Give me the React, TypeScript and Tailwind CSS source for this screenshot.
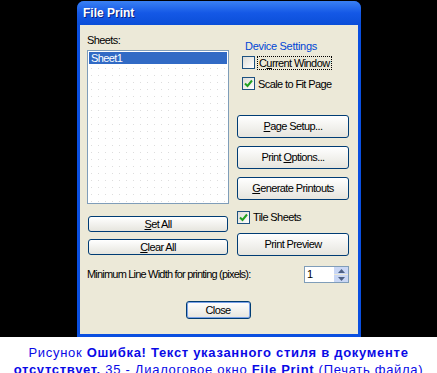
import type { ReactNode } from "react";

function XpButton({ children, className = "" }: { children: ReactNode; className?: string }) {
  return (
    <div
      className={`flex items-center justify-center rounded-[3px] border border-[#003C74] bg-gradient-to-b from-[#FFFFFF] to-[#E6E5DE] text-[11px] tracking-[-0.6px] text-black ${className}`}
    >
      {children}
    </div>
  );
}

function CheckBox({ checked }: { checked?: boolean }) {
  return (
    <span className="flex h-[13px] w-[13px] shrink-0 items-center justify-center border border-[#1C5180] bg-gradient-to-br from-[#DCDCD7] to-[#FFFFFF]">
      {checked && (
        <svg width="9" height="9" viewBox="0 0 9 9">
          <path d="M1 4.5 L3.5 7 L8 1.5" fill="none" stroke="#21A121" strokeWidth="2" />
        </svg>
      )}
    </span>
  );
}

export default function App() {
  return (
    <div className="flex h-[373px] w-[437px] flex-col overflow-hidden bg-black font-['Liberation_Sans',Arial,sans-serif]">
      <div className="h-[337px] shrink-0 pl-[77px] pt-[1px]">
        <div className="flex h-[336px] w-[284px] flex-col rounded-t-[7px] bg-[#0A4FE0]">
          <div className="flex h-[24px] shrink-0 items-center rounded-t-[7px] bg-gradient-to-b from-[#3A80F3] via-[#1458E6] to-[#0A4ED8] pl-[6px]">
            <span className="text-[12px] font-bold text-white [text-shadow:1px_1px_0_#0A1E80]">File Print</span>
          </div>
          <div className="mx-[3px] mb-[3px] flex flex-1 flex-col bg-[#ECE9D8] pl-[7px] pr-[9px] text-[11px] tracking-[-0.6px] text-black">
            <div className="flex gap-[8px]">
              {/* left column */}
              <div className="flex w-[142px] flex-col">
                <div className="mt-[9px] h-[13px] leading-[13px]">Sheets:</div>
                <div className="mt-[3px] h-[154px] border border-[#7F9DB9] bg-white bg-[radial-gradient(#DDDDDD_0.7px,transparent_0.7px)] bg-[length:7px_7px] p-[1px]">
                  <div className="h-[12px] bg-[#316AC5] pl-[2px] leading-[12px] text-white">Sheet1</div>
                </div>
                <XpButton className="ml-[1px] mt-[12px] h-[16px] w-[140px]">
                  <span>
                    <u>S</u>et All
                  </span>
                </XpButton>
                <XpButton className="ml-[1px] mt-[7px] h-[16px] w-[140px]">
                  <span>
                    <u>C</u>lear All
                  </span>
                </XpButton>
              </div>
              {/* right column */}
              <div className="flex w-[112px] flex-col">
                <div className="mt-[15px] h-[13px] pl-[8px] leading-[13px] tracking-[-0.3px] text-[#0046D5]">
                  Device Settings
                </div>
                <div className="mt-[3px] flex h-[13px] items-center gap-[2px] pl-[5px]">
                  <CheckBox />
                  <span className="border border-dotted border-black px-[1px] leading-[12px]">
                    C<u>u</u>rrent Window
                  </span>
                </div>
                <div className="mt-[8px] flex h-[13px] items-center gap-[3px] pl-[5px]">
                  <CheckBox checked />
                  <span className="leading-[12px]">Scale to Fit Page</span>
                </div>
                <XpButton className="mt-[25px] h-[23px]">
                  <span>
                    <u>P</u>age Setup...
                  </span>
                </XpButton>
                <XpButton className="mt-[8px] h-[23px]">
                  <span>
                    Print <u>O</u>ptions...
                  </span>
                </XpButton>
                <XpButton className="mt-[8px] h-[23px]">
                  <span>
                    <u>G</u>enerate Printouts
                  </span>
                </XpButton>
                <div className="mt-[11px] flex h-[12px] items-center gap-[3px]">
                  <CheckBox checked />
                  <span className="leading-[12px]">Tile Sheets</span>
                </div>
                <XpButton className="mt-[10px] h-[23px]">Print Preview</XpButton>
              </div>
            </div>
            <div className="mt-[10px] flex h-[17px] items-center justify-between">
              <span className="tracking-[-0.8px]">Minimum Line Width for printing (pixels):</span>
              <div className="flex h-[17px] w-[45px] border border-[#7F9DB9] bg-white">
                <span className="flex-1 pl-[2px] leading-[15px]">1</span>
                <div className="flex w-[14px] flex-col bg-[#C9D7F5]">
                  <div className="flex flex-1 items-center justify-center border-b border-[#ECE9D8]">
                    <svg width="7" height="4" viewBox="0 0 7 4">
                      <path d="M0 4 L3.5 0 L7 4 Z" fill="#4D6185" />
                    </svg>
                  </div>
                  <div className="flex flex-1 items-center justify-center">
                    <svg width="7" height="4" viewBox="0 0 7 4">
                      <path d="M0 0 L3.5 4 L7 0 Z" fill="#4D6185" />
                    </svg>
                  </div>
                </div>
              </div>
            </div>
            <div className="mt-[18px] flex justify-center">
              <XpButton className="h-[18px] w-[65px] shadow-[inset_0_0_0_1px_#7BA2E7]">Close</XpButton>
            </div>
          </div>
        </div>
      </div>
      <div className="flex-1 bg-white pt-[7px] text-center text-[13px] leading-[17px] tracking-[0.7px] text-[#0A0AE6]">
        Рисунок <b>Ошибка! Текст указанного стиля в документе</b>
        <br />
        <b>отсутствует.</b> 35 - Диалоговое окно <b>File Print</b> (Печать файла)
      </div>
    </div>
  );
}
